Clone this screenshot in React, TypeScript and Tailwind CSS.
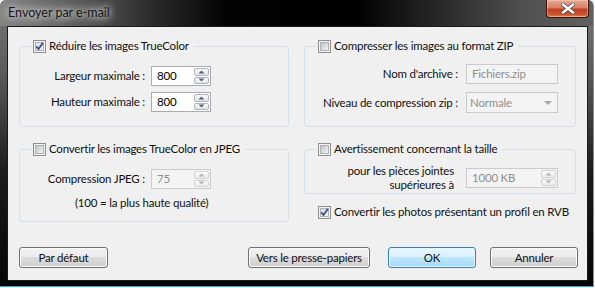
import React, { useId } from "react";

function Check({ checked }: { checked?: boolean }) {
  const id = useId();
  return (
    <svg width="13" height="13" viewBox="0 0 13 13" className="shrink-0">
      <defs>
        <linearGradient id={id} x1="0" y1="0" x2="1" y2="1">
          <stop offset="0" stopColor={checked ? "#d9dce0" : "#bcc0c5"} />
          <stop offset="1" stopColor="#f7f7f7" />
        </linearGradient>
      </defs>
      <rect x="0.5" y="0.5" width="12" height="12" fill="#f4f4f4" stroke="#8e8f8f" />
      <rect x="2.5" y="2.5" width="8" height="8" fill={`url(#${id})`} stroke="#aeb2b7" />
      {checked && (
        <path d="M3.3 6.3 L5.5 9 L9.9 2.9" fill="none" stroke="#3f5590" strokeWidth="1.9" />
      )}
    </svg>
  );
}

function Arrow({ up, disabled }: { up?: boolean; disabled?: boolean }) {
  return (
    <svg width="7" height="4" viewBox="0 0 7 4">
      <path d={up ? "M0.5 3.5 L3.5 0.5 L6.5 3.5 Z" : "M0.5 0.5 L3.5 3.5 L6.5 0.5 Z"} fill={disabled ? "#b4b4b4" : "#4d6185"} />
    </svg>
  );
}

function Spin({ value, disabled, wide }: { value: string; disabled?: boolean; wide?: boolean }) {
  const btn = disabled
    ? "border-[#d2d2d2] bg-[linear-gradient(#fafafa,#ececec)]"
    : "border-[#b1b3b8] bg-[linear-gradient(#fbfbfb,#e3e3e3)]";
  return (
    <div
      className={`flex h-[20px] ${wide ? "w-[92px]" : "w-[60px]"} border ${
        disabled ? "border-[#c9cbce] bg-[#f4f4f4] text-[#8f8f8f]" : "border-[#abadb3] bg-white text-black"
      }`}
    >
      <span className="flex flex-1 items-center pl-[5px]">{value}</span>
      <div className="flex w-[16px] flex-col gap-px py-px pr-px">
        <div className={`flex flex-1 items-center justify-center rounded-[2px] border ${btn}`}>
          <Arrow up disabled={disabled} />
        </div>
        <div className={`flex flex-1 items-center justify-center rounded-[2px] border ${btn}`}>
          <Arrow disabled={disabled} />
        </div>
      </div>
    </div>
  );
}

function Group({ label, checked, className, children }: { label: string; checked?: boolean; className: string; children: React.ReactNode }) {
  return (
    <fieldset className={`rounded-[3px] border border-[#d5dfe5] ${className}`}>
      <legend className="ml-[11px] flex items-center gap-[3px] pl-[2px] pr-[5px] leading-[16px]">
        <Check checked={checked} />
        <span className="whitespace-nowrap">{label}</span>
      </legend>
      {children}
    </fieldset>
  );
}

function Button({ children, primary, className }: { children: React.ReactNode; primary?: boolean; className?: string }) {
  return (
    <button
      className={`flex h-[21px] items-center justify-center whitespace-nowrap rounded-[3px] border ${
        primary
          ? "border-[#3c7fb1] bg-[linear-gradient(#eaf6fd_0%,#d9f0fc_50%,#bee6fd_50%,#a7d9f5_100%)] shadow-[inset_0_0_0_1px_#e6f6fd]"
          : "border-[#707070] bg-[linear-gradient(#f2f2f2_0%,#ebebeb_50%,#dddddd_50%,#cfcfcf_100%)] shadow-[inset_0_0_0_1px_#fbfbfb]"
      } ${className ?? ""}`}
    >
      {children}
    </button>
  );
}

export default function App() {
  return (
    <div className="h-[288px] w-[595px] bg-white font-['Lato',sans-serif] text-[11.5px] tracking-[-0.2px] text-[#111]">
      <div className="flex h-[287px] w-[594px] flex-col overflow-hidden rounded-t-[6px] border-b border-r border-[#2bb3d6] bg-[linear-gradient(180deg,#777777_0%,#5b5b5b_25%,#1c1c1c_60%,#050505_100%)]">
        {/* Title bar */}
        <div className="flex h-[26px] shrink-0 items-start justify-between bg-[linear-gradient(90deg,#858585_0%,#5e5e5e_12%,#2a2a2a_26%,#030303_38%,#000000_60%,#2e2e2e_76%,#4f4f4f_88%,#616161_100%)] pl-[8px] pr-[4px]">
          <span className="mt-[5px] text-[12.5px] leading-[16px] tracking-normal text-[#151515] [text-shadow:0_0_6px_#e6e6e6,0_0_10px_#d0d0d0,0_0_14px_#bdbdbd]">
            Envoyer par e-mail
          </span>
          <div className="flex h-[18px] w-[43px] items-center justify-center rounded-b-[4px] border border-t-0 border-[#3d1208] bg-[linear-gradient(#e9a996_0%,#d9806b_45%,#c0401f_55%,#cc5430_85%,#e0885a_100%)] shadow-[inset_0_0_0_1px_rgba(255,220,200,0.45)]">
            <svg width="14" height="11" viewBox="0 0 14 11">
              <path d="M2 1.5 L12 9.5 M12 1.5 L2 9.5" stroke="#4a4a4a" strokeWidth="4" strokeLinecap="square" />
              <path d="M2 1.5 L12 9.5 M12 1.5 L2 9.5" stroke="#ffffff" strokeWidth="2.4" strokeLinecap="square" />
            </svg>
          </div>
        </div>

        {/* Client area */}
        <div className="flex flex-1 pb-[5px] pl-[7px] pr-[5px]">
          <div className="flex flex-1 flex-col border border-[#1a1a1a] bg-[#f0f0f0] pl-[11px] pr-[11px] pt-[11px] pb-[12px]">
            <div className="flex gap-[15px]">
              <Group label="Réduire les images TrueColor" checked className="h-[89px] w-[270px]">
                <div className="grid grid-cols-[125px_60px] items-center gap-x-[6px] gap-y-[6px] pt-[12px]">
                  <span className="whitespace-nowrap text-right">Largeur maximale :</span>
                  <Spin value="800" />
                  <span className="whitespace-nowrap text-right">Hauteur maximale :</span>
                  <Spin value="800" />
                </div>
              </Group>
              <Group label="Compresser les images au format ZIP" className="h-[89px] flex-1">
                <div className="grid grid-cols-[153px_92px] items-center gap-x-[8px] gap-y-[8px] pt-[10px]">
                  <span className="whitespace-nowrap text-right">Nom d'archive :</span>
                  <div className="flex h-[20px] items-center border border-[#c9cbce] bg-[#f4f4f4] pl-[5px] text-[#8f8f8f]">
                    Fichiers.zip
                  </div>
                  <span className="whitespace-nowrap text-right">Niveau de compression zip :</span>
                  <div className="flex h-[21px] items-center justify-between border border-[#c9cbce] bg-[#f4f4f4] pl-[3px] pr-[5px] text-[#8f8f8f]">
                    <span>Normale</span>
                    <svg width="8" height="4" viewBox="0 0 8 4">
                      <path d="M0 0 L8 0 L4 4 Z" fill="#a8a8a8" />
                    </svg>
                  </div>
                </div>
              </Group>
            </div>

            <div className="mt-[14px] flex gap-[15px]">
              <Group label="Convertir les images TrueColor en JPEG" className="h-[81px] w-[270px]">
                <div className="grid grid-cols-[125px_60px] items-center gap-x-[6px] pt-[12px]">
                  <span className="whitespace-nowrap text-right">Compression JPEG :</span>
                  <Spin value="75" disabled />
                </div>
                <div className="mt-[6px] whitespace-nowrap pl-[55px] leading-[16px]">(100 = la plus haute qualité)</div>
              </Group>
              <div className="flex flex-1 flex-col">
                <Group label="Avertissement concernant la taille" className="h-[53px]">
                  <div className="flex items-center gap-[12px] pt-[7px]">
                    <div className="w-[149px] whitespace-nowrap text-right leading-[14px]">
                      pour les pièces jointes
                      <br />
                      supérieures à
                    </div>
                    <Spin value="1000 KB" disabled wide />
                  </div>
                </Group>
                <div className="ml-[14px] mt-[10px] flex items-center gap-[3px] leading-[16px]">
                  <Check checked />
                  <span className="whitespace-nowrap">Convertir les photos présentant un profil en RVB</span>
                </div>
              </div>
            </div>

            <div className="mt-[25px] flex items-center">
              <Button className="w-[89px]">Par défaut</Button>
              <div className="flex-1" />
              <Button className="w-[122px]">Vers le presse-papiers</Button>
              <Button primary className="ml-[18px] w-[88px]">OK</Button>
              <Button className="-mr-[2px] ml-[14px] w-[88px]">Annuler</Button>
            </div>
          </div>
        </div>
      </div>
    </div>
  );
}
